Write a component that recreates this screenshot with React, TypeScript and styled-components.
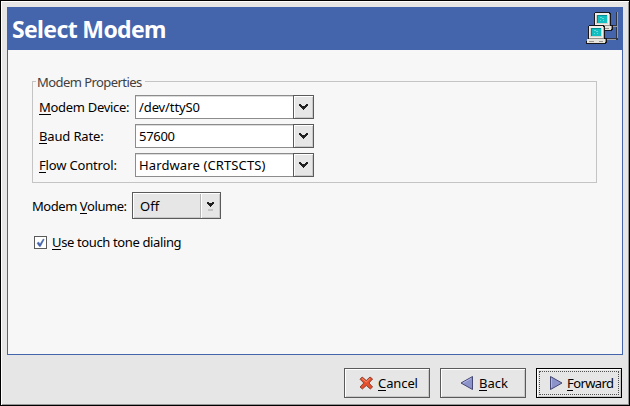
import React from 'react';
import styled, { createGlobalStyle, css } from 'styled-components';

const Global = createGlobalStyle`
  * { box-sizing: border-box; }
  body { margin: 0; background: #e6e6e6; }
`;

const Window = styled.main`
  width: 630px;
  height: 406px;
  display: flex;
  flex-direction: column;
  background: #e6e6e6;
  border: 1px solid #000;
  box-shadow: inset 1px 1px #fff, inset -1px -1px #969696;
  padding: 6px;
  font: 13px/18px "Noto Sans", "Open Sans", sans-serif;
  color: #000;
`;

const Page = styled.section`
  height: 348px;
  border: 1px solid #4464ac;
  background: #f7f7f7;
`;

const Header = styled.header`
  height: 42px;
  padding: 0 4px;
  display: flex;
  align-items: center;
  justify-content: space-between;
  background: #4464ac;
  color: #fff;
`;

const Title = styled.h1`
  margin: 0;
  font: bold 23px/30px "Noto Sans", "Open Sans", sans-serif;
  letter-spacing: -0.64px;
`;

const NetworkIcon = styled.svg`
  width: 32px;
  height: 32px;
  margin-bottom: 2px;
`;

const Content = styled.div`
  padding: 22px 25px 0 24px;
`;

const Group = styled.fieldset`
  height: 111px;
  margin: 0;
  padding: 5px 0 0 6px;
  border: 1px solid #c4c4c4;
  display: flex;
  flex-direction: column;
  gap: 5px;
`;

const Legend = styled.legend`
  height: 18px;
  width: 109px;
  margin-left: -3px;
  padding: 1px 0 0 1px;
  color: #404040;
  white-space: nowrap;
`;

const Text = styled.span<{ $spacing?: number }>`
  white-space: nowrap;
  letter-spacing: ${p => p.$spacing ?? 0}px;
`;

const Mnemonic = styled.span`
  box-shadow: 0 -1px #000 inset;
  display: inline-block;
  height: 17px;
`;

const Field = styled.div`
  display: grid;
  grid-template-columns: 96px 158px 21px;
  height: 24px;
  align-items: center;
`;

const Entry = styled.div`
  height: 24px;
  padding: 2px 3px;
  background: #fff;
  border: 1px solid #8c8c8c;
  border-right: 0;
  box-shadow: inset 0 1px #dcdcdc;
`;

const raised = css`
  background: #e6e6e6;
  border: 1px solid #5a5a5a;
  box-shadow: inset 1px 1px #fff, inset -1px -1px #c8c8c8;
`;

const DropButton = styled.div`
  ${raised}
  height: 24px;
  display: grid;
  place-items: center;
`;

const VolumeRow = styled.div`
  margin-top: 9px;
  display: flex;
  height: 27px;
`;

const VolumeLabel = styled.div`
  width: 100px;
  padding-top: 5px;
`;

const OptionMenu = styled.div`
  ${raised}
  width: 89px;
  display: flex;
  justify-content: space-between;
  padding: 4px 0 0 7px;
`;

const OptionArrow = styled.div`
  width: 20px;
  height: 24px;
  margin-top: -3px;
  border-left: 1px solid #b4b4b4;
  box-shadow: inset 1px 0 #fff;
  padding: 7px 0 0 6px;
  line-height: 0;
`;

const CheckRow = styled.div`
  display: flex;
  align-items: center;
  gap: 5px;
  margin: 14px 0 0 2px;
  height: 18px;
`;

const CheckBox = styled.div`
  width: 13px;
  height: 13px;
  margin-top: 1px;
  background: #fff;
  border: 1px solid #5a5a5a;
  line-height: 0;
`;

const Actions = styled.footer`
  display: flex;
  justify-content: flex-end;
  gap: 10px;
  padding: 13px 1px 0 0;
`;

const Button = styled.button<{ $focused?: boolean; $inset: number }>`
  ${raised}
  position: relative;
  width: 86px;
  height: 30px;
  padding: 0 0 0 ${p => p.$inset}px;
  display: flex;
  align-items: center;
  gap: 4px;
  font: inherit;
  color: #000;
  ${p => p.$focused && css`
    border-color: #000;
    &::after {
      content: "";
      position: absolute;
      inset: 2px;
      border: 1px dotted #505050;
    }
  `}
`;

const Chevron = () => (
  <svg width="9" height="6" shapeRendering="crispEdges" fill="#202020">
    <path d="M0 0h2v1h1v1h3V1h1V0h2v2H8v1H7v1H6v1H5v1H4V5H3V4H2V3H1V2H0z" />
  </svg>
);

const OptionGlyph = () => (
  <svg width="7" height="10" shapeRendering="crispEdges">
    <path d="M0 1h2v1h3V1h2v2H6v1H5v1H4v1H3V5H2V4H1V3H0z" fill="#202020" />
    <path d="M1 8h5v2H1z" fill="#c4c4c4" />
  </svg>
);

const Cross = () => (
  <svg width="15" height="14" viewBox="0 0 15 14">
    <path d="M3.2 1 7.3 4.5 11 1 13.6 3 10 7l3.6 4-2.3 2-4-3.5L3.4 13 1 11l3.8-4L1 3.2z" fill="#e4502e" stroke="#793020" strokeWidth=".8" />
    <path d="M3 2.5 7.3 6 11 2.5" fill="none" stroke="#ff8d68" />
  </svg>
);

const Arrow = ({ flip = false }: { flip?: boolean }) => (
  <svg width="15" height="16" viewBox="0 0 15 16">
    <path
      d={flip ? 'M2.5 1.5v13L14 8z' : 'M12.5 1.5v13L1 8z'}
      fill="#8c92ca" stroke="#444873" strokeLinejoin="round"
    />
    <path d={flip ? 'M3.5 3.3v9.3' : 'M11 3.5 3 8'} stroke="#b1b6e4" />
  </svg>
);

const Monitor = () => (
  <>
    <path d="M4 0h14l2 2v11h2v4l-2 2H1v-3l2-2V1z" fill="#18181c" />
    <path d="M4 1h14v12H4z" fill="#f0eee8" />
    <path d="M18 2h1v11h-1z" fill="#b5b2aa" />
    <path d="M5 3h12v9H5z" fill="#d4d2ca" />
    <path d="M6 3h10v8H6z" fill="#008e94" />
    <path d="M7 4h9v7H7z" fill="#12bec0" />
    <path d="M9 5h2v1H9zM11 6h2v1h-2zM9 8h1v1H9zM12 8h1v1h-1z" fill="#62dcd7" />
    <path d="M4 13h15v1H4z" fill="#98948d" />
    <path d="M2 14h18v4H2z" fill="#e7e4dc" />
    <path d="M20 14h1v2l-1 1z" fill="#908d86" />
    <path d="M4 16h5v1H4zM14 16h4v1h-4z" fill="#98948d" />
  </>
);

const Network = () => (
  <NetworkIcon viewBox="0 0 32 32" shapeRendering="crispEdges">
    <path d="M31 0v14h-5M31 14v13H19" fill="none" stroke="#303540" strokeWidth="2" />
    <path d="M31.5 0v26M26 14.5h5M19 27.5h11" fill="none" stroke="#989ba3" />
    <g transform="translate(5 0)"><Monitor /></g>
    <g transform="translate(-1 13)"><Monitor /></g>
  </NetworkIcon>
);

const rows = [
  { key: 'M', rest: 'odem Device:', value: '/dev/ttyS0', labelSpacing: -0.3, valueSpacing: -0.1 },
  { key: 'B', rest: 'aud Rate:', value: '57600', labelSpacing: -0.15, valueSpacing: -0.3 },
  { key: 'F', rest: 'low Control:', value: 'Hardware (CRTSCTS)', labelSpacing: -0.17, valueSpacing: 0.12 },
];

export default function App() {
  return (
    <>
      <Global />
      <Window>
        <Page>
          <Header>
            <Title>Select Modem</Title>
            <Network />
          </Header>
          <Content>
            <Group>
              <Legend><Text $spacing={-0.56}>Modem Properties</Text></Legend>
              {rows.map(row => (
                <Field key={row.key}>
                  <Text $spacing={row.labelSpacing}><Mnemonic>{row.key}</Mnemonic>{row.rest}</Text>
                  <Entry><Text $spacing={row.valueSpacing}>{row.value}</Text></Entry>
                  <DropButton><Chevron /></DropButton>
                </Field>
              ))}
            </Group>
            <VolumeRow>
              <VolumeLabel><Text $spacing={-0.46}>Modem <Mnemonic>V</Mnemonic>olume:</Text></VolumeLabel>
              <OptionMenu>
                <Text>Off</Text>
                <OptionArrow><OptionGlyph /></OptionArrow>
              </OptionMenu>
            </VolumeRow>
            <CheckRow>
              <CheckBox>
                <svg width="11" height="11"><path d="M2 6.2 3.6 5 5 7 8.2 2l1 .5L5.4 9.5H4.4z" fill="#4464ac" stroke="#4464ac" strokeWidth=".5" /></svg>
              </CheckBox>
              <Text $spacing={-0.37}><Mnemonic>U</Mnemonic>se touch tone dialing</Text>
            </CheckRow>
          </Content>
        </Page>
        <Actions>
          <Button $inset={14}><Cross /><Text $spacing={-0.1}><Mnemonic>C</Mnemonic>ancel</Text></Button>
          <Button $inset={19}><Arrow /><Text><Mnemonic>B</Mnemonic>ack</Text></Button>
          <Button $inset={11} $focused><Arrow flip /><Text $spacing={-0.6}><Mnemonic>F</Mnemonic>orward</Text></Button>
        </Actions>
      </Window>
    </>
  );
}
